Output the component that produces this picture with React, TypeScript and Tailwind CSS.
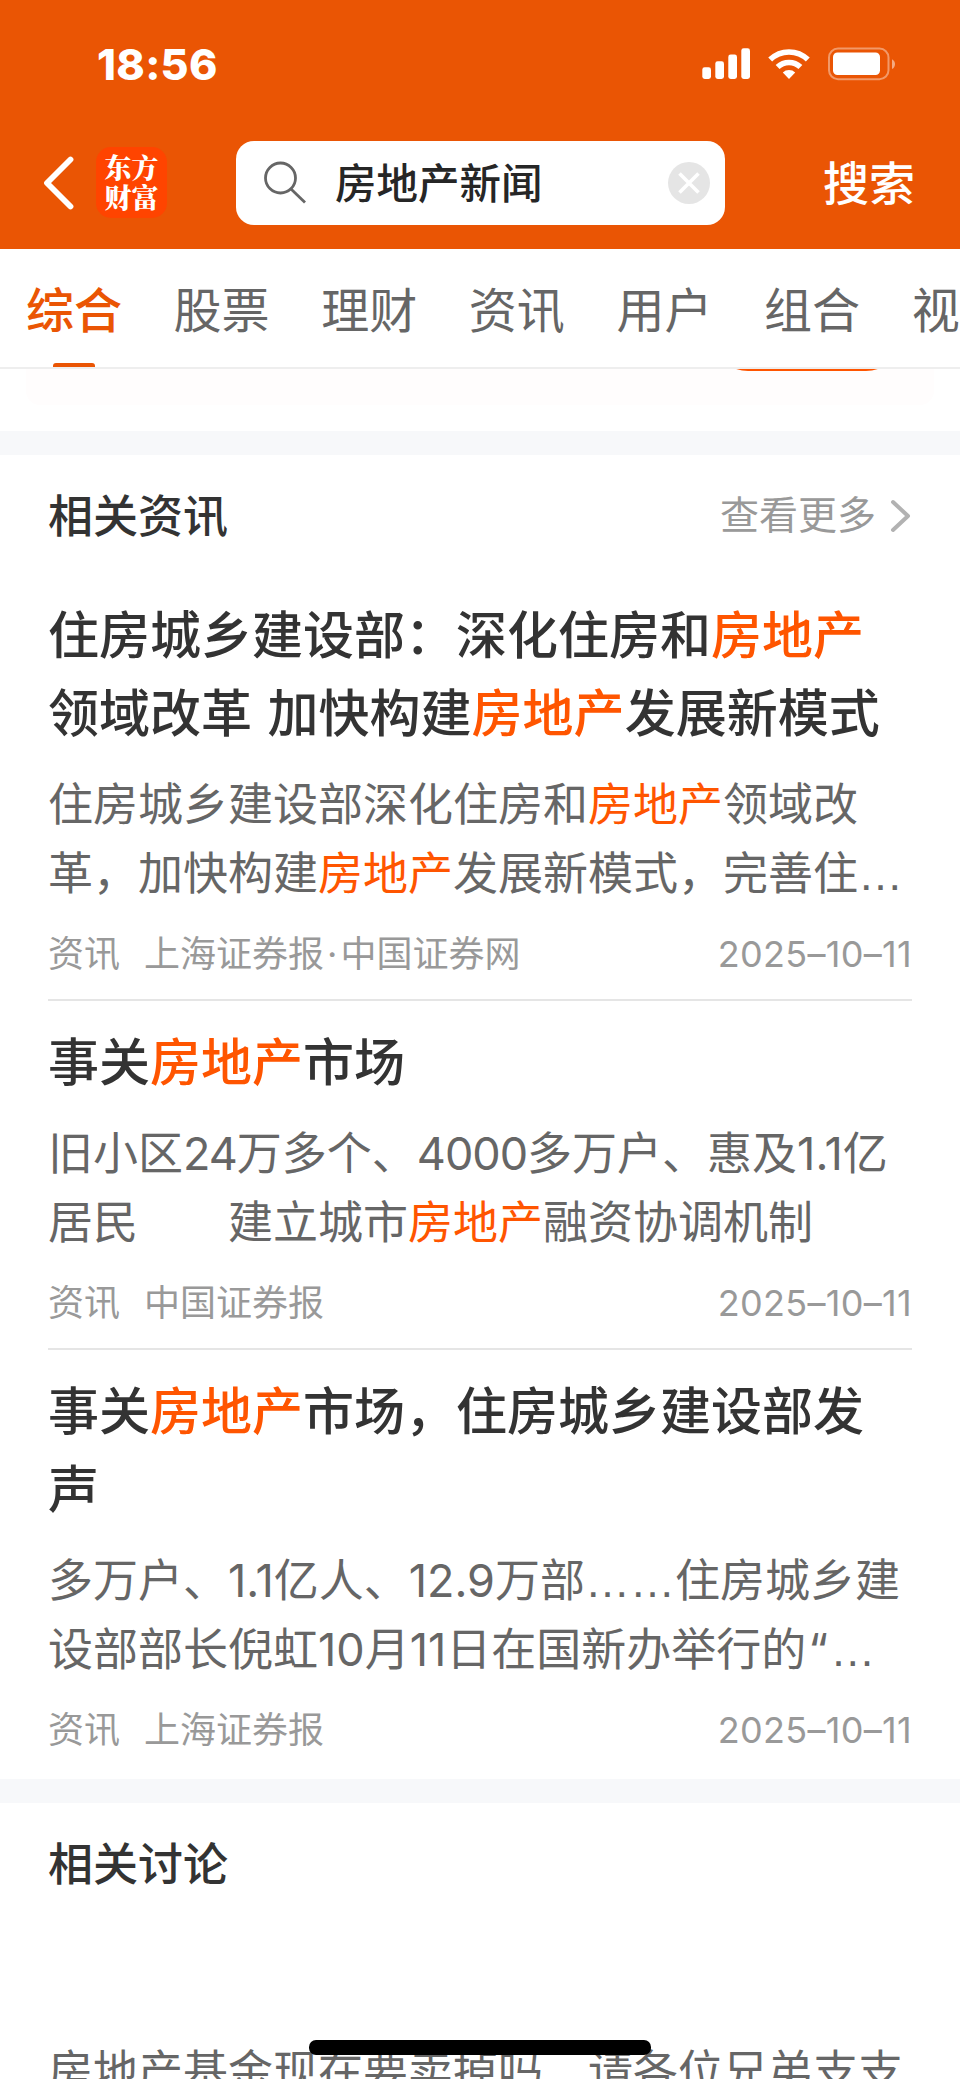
import { Fragment } from "react";

const KEYWORD = "房地产";

const tabs = ["综合", "股票", "理财", "资讯", "用户", "组合", "视频"];

const news = [
  {
    title: ["住房城乡建设部：深化住房和房地产", "领域改革 加快构建房地产发展新模式"],
    summary: [
      "住房城乡建设部深化住房和房地产领域改",
      "革，加快构建房地产发展新模式，完善住…",
    ],
    source: "上海证券报·中国证券网",
    date: "2025–10–11",
  },
  {
    title: ["事关房地产市场"],
    summary: [
      "旧小区24万多个、4000多万户、惠及1.1亿",
      "居民　　建立城市房地产融资协调机制",
    ],
    source: "中国证券报",
    date: "2025–10–11",
  },
  {
    title: ["事关房地产市场，住房城乡建设部发", "声"],
    summary: [
      "多万户、1.1亿人、12.9万部……住房城乡建",
      "设部部长倪虹10月11日在国新办举行的“…",
    ],
    source: "上海证券报",
    date: "2025–10–11",
  },
];

// Evens out punctuation and digit widths between the latin and chinese fonts
function Spaced({ text }: { text: string }) {
  return (
    <>
      {text.split(/(…+|“|·|[02-9]{2,})/).map((part, i) => {
        if (i % 2 === 0) return <Fragment key={i}>{part}</Fragment>;
        if (part[0] === "…")
          return (
            <span key={i} className="font-['Liberation_Sans',sans-serif] leading-none">
              {part}
            </span>
          );
        if (part === "“")
          return (
            <span key={i} className="pl-[2px] pr-[2px]">
              {part}
            </span>
          );
        if (part === "·")
          return (
            <span key={i} className="px-[3px]">
              {part}
            </span>
          );
        return (
          <span key={i} className="tracking-[-1px]">
            {part}
          </span>
        );
      })}
    </>
  );
}

// Colours every occurrence of the search keyword
function Highlight({ text }: { text: string }) {
  return (
    <>
      {text.split(KEYWORD).map((part, i) => (
        <Fragment key={i}>
          {i > 0 && <span className="text-[#ff5500]">{KEYWORD}</span>}
          <Spaced text={part} />
        </Fragment>
      ))}
    </>
  );
}

function StatusBar() {
  return (
    <div className="flex h-[128px] items-center justify-between pl-[97px] pr-[64px]">
      <span className="text-[43px] font-extrabold leading-none tracking-[0.3px] text-white">18:56</span>
      <svg width="194" height="34" viewBox="0 0 194 34" fill="#fff">
        <rect x="0.3" y="20.3" width="8.7" height="11.7" rx="2.4" />
        <rect x="13.3" y="14.3" width="8.7" height="17.7" rx="2.4" />
        <rect x="26.3" y="7.5" width="8.7" height="24.5" rx="2.4" />
        <rect x="39.3" y="1.3" width="8.7" height="30.7" rx="2.4" />
        <g fill="none" stroke="#fff" strokeWidth="5.6">
          <path d="M68.2 12.6a27 27 0 0 1 37.6 0" />
          <path d="M75.6 20a16.5 16.5 0 0 1 22.8 0" />
        </g>
        <path d="M87 32l-6.2-6.4a9 9 0 0 1 12.4 0z" />
        <rect
          x="127"
          y="1.6"
          width="59.5"
          height="30.6"
          rx="9"
          fill="none"
          stroke="#fff"
          strokeOpacity="0.4"
          strokeWidth="2"
        />
        <rect x="131" y="5.4" width="47" height="22.6" rx="4.5" />
        <path d="M190 12.2c4 2 4 7.800 0 9.800z" fillOpacity="0.5" />
      </svg>
    </div>
  );
}

function SearchHeader() {
  return (
    <div className="flex h-[121px] items-center pb-[12px]">
      <svg className="ml-[42px]" width="34" height="56" viewBox="0 0 34 56" fill="none">
        <path
          d="M28.500 4.500L5 28L28.500 51.500"
          stroke="#fff"
          strokeWidth="5.800"
          strokeLinecap="round"
          strokeLinejoin="round"
        />
      </svg>
      <div className="ml-[20px] flex h-[71px] w-[71px] flex-col items-center justify-center rounded-[15px] bg-[#ff4400] pb-px font-['Noto_Serif_CJK_SC','Noto_Sans_CJK_SC',sans-serif] text-[27px] font-black leading-[30px] text-white">
        <span>东方</span>
        <span>财富</span>
      </div>
      <div className="ml-[69px] flex h-[84px] w-[489px] items-center rounded-[18px] bg-white pl-[27px] pr-[15px]">
        <svg width="44" height="44" viewBox="0 0 44 44" fill="none" stroke="#666" strokeWidth="2.800">
          <circle cx="17.500" cy="17" r="15" />
          <path d="M28 28L42 41.500" />
        </svg>
        <span className="ml-[28px] flex-1 pt-[4px] text-[41.500px] font-medium leading-none text-[#262626]">
          房地产新闻
        </span>
        <svg width="42" height="42" viewBox="0 0 42 42" fill="none">
          <circle cx="21" cy="21" r="21" fill="#e5e5e5" />
          <path d="M11.500 11.500L30.500 30.500M30.500 11.500L11.500 30.500" stroke="#fff" strokeWidth="3.600" />
        </svg>
      </div>
      <span className="ml-[98px] pt-px text-[46px] font-medium leading-none text-white">搜索</span>
    </div>
  );
}

function Tabs() {
  return (
    <nav className="flex h-[120px] gap-[51.6px] overflow-hidden border-b-2 border-[#eeeeee] bg-white pl-[26px]">
      {tabs.map((tab, i) => (
        <div
          key={tab}
          className={
            i === 0
              ? "flex shrink-0 flex-col items-center justify-between text-[48px] font-medium text-[#ea5504]"
              : "flex shrink-0 flex-col items-center justify-between text-[48px] text-[#666666]"
          }
        >
          <span className="pt-[15px] leading-[94px]">{tab}</span>
          {i === 0 && <span className="h-1 w-[42px] rounded-t-[3px] bg-[#ea5504]" />}
        </div>
      ))}
    </nav>
  );
}

function NewsItem({ item }: { item: (typeof news)[number] }) {
  return (
    <article className="border-b-2 border-[#e5e5e5] pb-5 pt-[23px] last:border-b-0">
      <h3 className="whitespace-pre text-[51px] font-medium leading-[78px] text-[#333333] [word-spacing:2px]">
        {item.title.map((line) => (
          <div key={line}>
            <Highlight text={line} />
          </div>
        ))}
      </h3>
      <div className="mt-[17px] whitespace-pre text-[45px] leading-[69px] text-[#666666]">
        {item.summary.map((line) => (
          <p key={line}>
            <Highlight text={line} />
          </p>
        ))}
      </div>
      <div className="mt-[21px] flex h-[50px] items-center justify-between text-[36px] leading-[50px] text-[#999999]">
        <div className="flex gap-6">
          <span>资讯</span>
          <span>
            <Spaced text={item.source} />
          </span>
        </div>
        <span className="tracking-[0.3px]">{item.date}</span>
      </div>
    </article>
  );
}

export default function App() {
  return (
    <div className="relative h-[2079px] w-[960px] overflow-hidden bg-white font-['Inter','Noto_Sans_CJK_SC',sans-serif]">
      <header className="bg-[#ea5504]">
        <StatusBar />
        <SearchHeader />
      </header>
      <Tabs />

      {/* tail of the card that is scrolled under the tabs */}
      <div className="h-[62px] overflow-hidden px-[26px]">
        <div className="flex h-[36px] justify-end rounded-b-[14px] bg-[#fffdfd] pr-[32px]">
          <div className="-mt-[70px] h-[72px] w-[190px] rounded-full bg-[#ff5500]" />
        </div>
      </div>
      <div className="h-6 bg-[#f7f8fa]" />

      <section className="px-12">
        <div className="flex h-[119px] items-center justify-between pt-[4px]">
          <h2 className="text-[45px] font-medium text-[#333333]">相关资讯</h2>
          <div className="flex items-center pb-[2px] text-[39px] text-[#999999]">
            <span>查看更多</span>
            <svg className="ml-[12px]" width="24" height="34" viewBox="0 0 24 34" fill="none">
              <path
                d="M5 3L20 17L5 31"
                stroke="#b2b2b2"
                strokeWidth="4"
                strokeLinecap="round"
                strokeLinejoin="round"
              />
            </svg>
          </div>
        </div>
        {news.map((item, i) => (
          <NewsItem key={i} item={item} />
        ))}
      </section>

      <div className="mt-1 h-6 bg-[#f7f8fa]" />
      <section className="px-12">
        <h2 className="pt-[28px] text-[45px] font-medium leading-[68px] text-[#333333]">相关讨论</h2>
        <p className="mt-[138px] whitespace-pre text-[45px] leading-[69px] text-[#666666]">
          房地产基金现在要卖掉吗　请各位兄弟支支
        </p>
      </section>

      <div className="absolute bottom-[24px] left-[309px] h-[15px] w-[342px] rounded-[7px] bg-black" />
    </div>
  );
}
